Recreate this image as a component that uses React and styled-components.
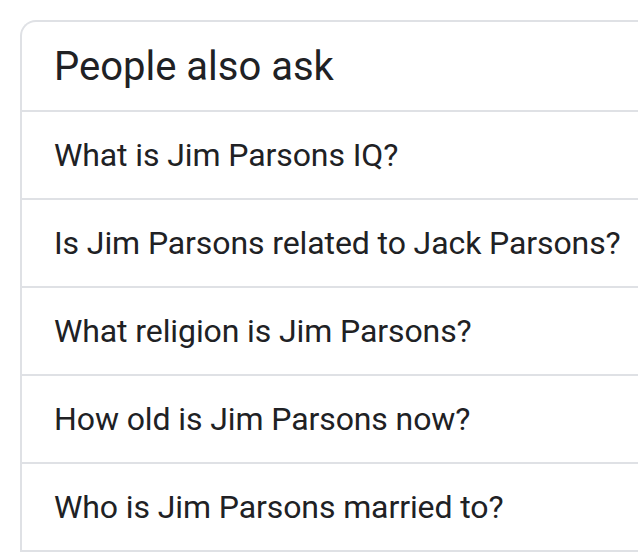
import React from 'react'
import styled, { createGlobalStyle } from 'styled-components'

const GlobalStyle = createGlobalStyle`
  html, body {
    margin: 0;
    padding: 0;
    background: #fff;
    overflow: hidden;
  }
  body {
    font-family: Roboto, "Liberation Sans", Arial, sans-serif;
    color: #202124;
  }
`

const Page = styled.div`
  padding: 20px 0 0 20px;
  width: 638px;
  height: 552px;
  box-sizing: border-box;
  overflow: hidden;
`

const Card = styled.section`
  width: 700px;
  border: 2px solid #dfe1e5;
  border-right: none;
  border-bottom: none;
  border-top-left-radius: 16px;
  display: flex;
  flex-direction: column;
`

const Title = styled.h2`
  margin: 0;
  height: 88px;
  padding: 0 32px;
  display: flex;
  align-items: center;
  font-size: 40px;
  font-weight: 400;
  border-bottom: 2px solid #dfe1e5;
`

const Question = styled.div`
  height: 86px;
  padding: 0 32px;
  display: flex;
  align-items: center;
  font-size: 32px;
  letter-spacing: -0.1px;
  border-bottom: 2px solid #dfe1e5;
  cursor: pointer;
`

const questions = [
  'What is Jim Parsons IQ?',
  'Is Jim Parsons related to Jack Parsons?',
  'What religion is Jim Parsons?',
  'How old is Jim Parsons now?',
  'Who is Jim Parsons married to?',
]

export default function App() {
  return (
    <Page>
      <GlobalStyle />
      <Card>
        <Title>People also ask</Title>
        {questions.map(q => (
          <Question key={q}>{q}</Question>
        ))}
      </Card>
    </Page>
  )
}
